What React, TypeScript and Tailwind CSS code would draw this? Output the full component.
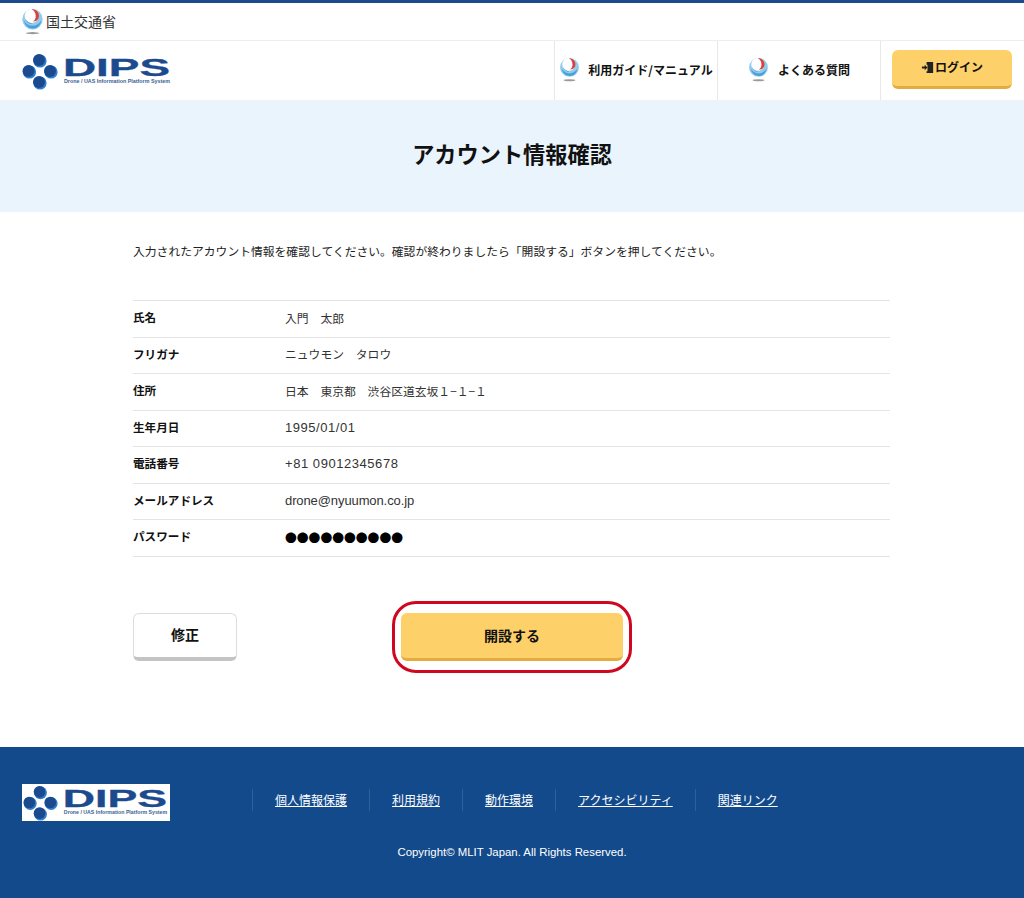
import React from 'react';

const jp = { fontFamily: '"Noto Sans CJK JP", "Liberation Sans", sans-serif' };

const MlitMark = ({ className }: { className?: string }) => (
  <svg viewBox="0 0 24 28" className={className}>
    <circle cx="12" cy="11" r="11" fill="#93cbec" />
    <path d="M2.500 12C4 18 8 21 12.500 21C17 21 20.500 18 21.500 12C19 16 16 18 12 18C8 18 5 16 2.500 12z" fill="#4a9fd9" />
    <ellipse cx="11" cy="7.500" rx="7.500" ry="7.500" fill="#ffffff" />
    <path d="M11 0C16 0 20.500 4.500 18.500 10C17.500 12.500 15 13.500 12.500 13.500C14.500 12 15.500 10 15.500 7.500C15.500 4 13.500 1.500 11 0z" fill="#d8413c" />
    <path d="M4 10C6 14 9 15.500 12 15.500C9.500 17 5.500 15 4 10z" fill="#4a9fd9" />
    <ellipse cx="12" cy="26" rx="7" ry="1.100" fill="#9a9a9a" />
  </svg>
);

const DipsLogo = ({ className }: { className?: string }) => (
  <svg viewBox="0 0 150 38" className={className}>
    <circle cx="18" cy="9" r="6.600" fill="#2f7fd0" />
    <circle cx="7.500" cy="20" r="6.600" fill="#2f7fd0" />
    <circle cx="29" cy="20" r="6.600" fill="#2f7fd0" />
    <circle cx="18" cy="31" r="6.600" fill="#2f7fd0" />
    <circle cx="17" cy="8" r="6" fill="#1b4a8f" />
    <circle cx="6.500" cy="19" r="6" fill="#1b4a8f" />
    <circle cx="28" cy="19" r="6" fill="#1b4a8f" />
    <circle cx="17" cy="30" r="6" fill="#1b4a8f" />
    <text
      x="41"
      y="24"
      textLength="107"
      lengthAdjust="spacingAndGlyphs"
      fontFamily="Liberation Sans"
      fontWeight="700"
      fontSize="24"
      fill="#1b4a8f"
      stroke="#1b4a8f"
      strokeWidth="0.3"
    >
      DIPS
    </text>
    <text
      x="42"
      y="31"
      textLength="106"
      lengthAdjust="spacingAndGlyphs"
      fontFamily="Liberation Sans"
      fontWeight="700"
      fontSize="4.600"
      fill="#3a5f93"
    >
      Drone / UAS Information Platform System
    </text>
  </svg>
);

const DoorIcon = () => (
  <svg viewBox="0 0 14 14" className="h-[13px] w-[13px]">
    <path d="M6 1h7v12H6v-2h1v1h0V2H7v2H6z" fill="#222" />
    <path d="M8 1.500l5-.5v12l-5-1z" fill="#222" />
    <path d="M1 6h3V4l3 3-3 3V8H1z" fill="#222" />
  </svg>
);

const latin = { fontFamily: '"Liberation Sans", sans-serif' };

const rows = [
  { label: '氏名', value: '入門　太郎', cls: 'text-[11.800px]' },
  { label: 'フリガナ', value: 'ニュウモン　タロウ', cls: 'text-[11.800px]' },
  { label: '住所', value: '日本　東京都　渋谷区道玄坂１−１−１', cls: 'text-[11.800px]' },
  { label: '生年月日', value: '1995/01/01', cls: 'text-[13px] tracking-[0.55px]', style: latin },
  { label: '電話番号', value: '+81 09012345678', cls: 'text-[13px] tracking-[0.55px]', style: latin },
  { label: 'メールアドレス', value: 'drone@nyuumon.co.jp', cls: 'text-[13px] tracking-[-0.1px]', style: latin },
  { label: 'パスワード', value: '●●●●●●●●●●', cls: 'text-[11.800px] text-black' },
];

const footerLinks = ['個人情報保護', '利用規約', '動作環境', 'アクセシビリティ', '関連リンク'];

const App = () => {
  return (
    <div className="min-h-[898px] w-[1024px] bg-white text-[#111]" style={jp}>
      {/* top bar */}
      <div className="flex h-[41px] items-center border-t-[3px] border-b border-t-[#1c4a8c] border-b-[#eeeeee] pl-[21px]">
        <MlitMark className="h-[26px] w-[23px]" />
        <span className="ml-[2px] text-[14px] text-[#333]">国土交通省</span>
      </div>

      {/* header */}
      <header className="flex h-[59px] items-stretch justify-between">
        <div className="flex items-center pl-[22px]">
          <DipsLogo className="h-[38px] w-[150px]" />
        </div>
        <nav className="flex items-stretch">
          <a className="flex w-[163px] items-center justify-center gap-[8px] border-l border-[#e8e8e8] pb-[2px] text-[12px] font-bold">
            <MlitMark className="h-[24px] w-[21px]" />
            利用ガイド/マニュアル
          </a>
          <a className="flex w-[163px] items-center justify-center gap-[9px] border-l border-[#e8e8e8] pb-[2px] text-[12px] font-bold">
            <MlitMark className="h-[24px] w-[21px]" />
            よくある質問
          </a>
          <div className="flex w-[144px] items-center border-l border-[#e8e8e8] pb-[2px] pl-[11px]">
            <button className="flex h-[39px] w-[120px] items-center justify-center gap-[1px] rounded-[6px] border-b-[3px] border-[#e3ac3f] bg-[#fdd069] pb-[2px] text-[12px] font-bold">
              <DoorIcon />
              ログイン
            </button>
          </div>
        </nav>
      </header>

      {/* title */}
      <div className="flex h-[112px] items-center justify-center bg-[#e9f4fd] pb-[5px]">
        <h1 className="text-[22.200px] font-bold">アカウント情報確認</h1>
      </div>

      <main className="mx-[133px] w-[757px]">
        <p className="mt-[29px] text-[11.800px] leading-[20px] text-[#222]">
          入力されたアカウント情報を確認してください。確認が終わりましたら「開設する」ボタンを押してください。
        </p>

        <div className="mt-[39px] border-t border-[#e4e4e4]">
          {rows.map((row) => (
            <div key={row.label} className="flex h-[36.500px] items-center border-b border-[#e4e4e4] pb-[2px]">
              <div className="w-[152px] text-[11.600px] font-bold">{row.label}</div>
              <div className={`${row.cls} text-[#333]`} style={row.style}>
                {row.value}
              </div>
            </div>
          ))}
        </div>

        <div className="mt-[44px] flex items-center">
          <button className="h-[48px] w-[104px] rounded-[6px] border border-b-[4px] border-[#dddddd] border-b-[#c4c4c4] bg-white pb-[2px] text-[14px] font-bold">
            修正
          </button>
          <div className="ml-[155px] rounded-[24px] border-[3px] border-[#d0081f] px-[6px] py-[9px]">
            <button className="block h-[48px] w-[222px] rounded-[6px] border-b-[3px] border-[#e3ac3f] bg-[#fdd069] text-[14px] font-bold">
              開設する
            </button>
          </div>
        </div>
      </main>

      {/* footer */}
      <footer className="mt-[74px] h-[151px] bg-[#134a8b] pl-[22px] pt-[37px] text-white">
        <div className="flex items-center">
          <div className="flex h-[37px] w-[148px] items-center overflow-hidden bg-white">
            <DipsLogo className="h-[37px] w-[148px]" />
          </div>
          <ul className="ml-[82px] flex items-center pb-[4px]">
            {footerLinks.map((link) => (
              <li key={link} className="flex h-[22px] items-center border-l border-[#2f6098] px-[22px] text-[12px] underline">
                {link}
              </li>
            ))}
          </ul>
        </div>
        <p className="mt-[23px] pr-[22px] text-center text-[11.400px]" style={latin}>
          Copyright© MLIT Japan. All Rights Reserved.
        </p>
      </footer>
    </div>
  );
};

export default App;
